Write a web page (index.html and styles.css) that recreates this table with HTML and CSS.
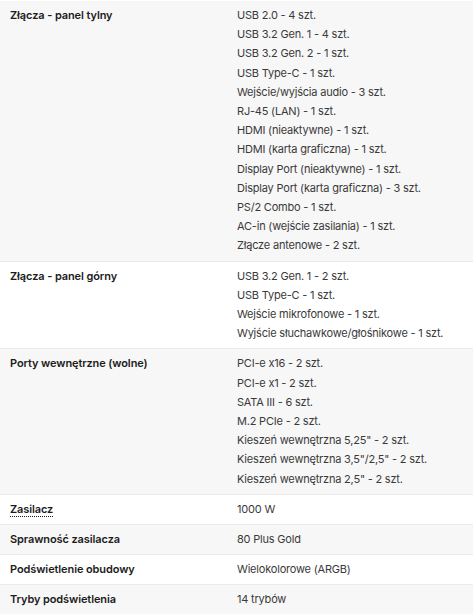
FILE: index.html
```html
<!DOCTYPE html>
<html lang="pl">
<head>
<meta charset="utf-8">
<link rel="stylesheet" href="styles.css">
</head>
<body>
<div class="specs">
  <div class="row alt">
    <div class="label">Złącza - panel tylny</div>
    <div class="value">
      <div>USB 2.0 - 4 szt.</div>
      <div>USB 3.2 Gen. 1 - 4 szt.</div>
      <div>USB 3.2 Gen. 2 - 1 szt.</div>
      <div>USB Type-C - 1 szt.</div>
      <div>Wejście/wyjścia audio - 3 szt.</div>
      <div>RJ-45 (LAN) - 1 szt.</div>
      <div>HDMI (nieaktywne) - 1 szt.</div>
      <div>HDMI (karta graficzna) - 1 szt.</div>
      <div>Display Port (nieaktywne) - 1 szt.</div>
      <div>Display Port (karta graficzna) - 3 szt.</div>
      <div>PS/2 Combo - 1 szt.</div>
      <div>AC-in (wejście zasilania) - 1 szt.</div>
      <div>Złącze antenowe - 2 szt.</div>
    </div>
  </div>
  <div class="row">
    <div class="label">Złącza - panel górny</div>
    <div class="value">
      <div>USB 3.2 Gen. 1 - 2 szt.</div>
      <div>USB Type-C - 1 szt.</div>
      <div>Wejście mikrofonowe - 1 szt.</div>
      <div>Wyjście słuchawkowe/głośnikowe - 1 szt.</div>
    </div>
  </div>
  <div class="row alt">
    <div class="label">Porty wewnętrzne (wolne)</div>
    <div class="value">
      <div>PCI-e x16 - 2 szt.</div>
      <div>PCI-e x1 - 2 szt.</div>
      <div>SATA III - 6 szt.</div>
      <div>M.2 PCIe - 2 szt.</div>
      <div>Kieszeń wewnętrzna 5,25" - 2 szt.</div>
      <div>Kieszeń wewnętrzna 3,5"/2,5" - 2 szt.</div>
      <div>Kieszeń wewnętrzna 2,5" - 2 szt.</div>
    </div>
  </div>
  <div class="row">
    <div class="label"><span class="dotted">Zasilacz</span></div>
    <div class="value"><div>1000 W</div></div>
  </div>
  <div class="row alt">
    <div class="label">Sprawność zasilacza</div>
    <div class="value"><div>80 Plus Gold</div></div>
  </div>
  <div class="row">
    <div class="label">Podświetlenie obudowy</div>
    <div class="value"><div>Wielokolorowe (ARGB)</div></div>
  </div>
  <div class="row alt">
    <div class="label">Tryby podświetlenia</div>
    <div class="value"><div>14 trybów</div></div>
  </div>
</div>
</body>
</html>
```

FILE: styles.css
```css
html, body {
  margin: 0;
  padding: 0;
  background: #ffffff;
}
body {
  font-family: Inter, "Noto Sans", sans-serif;
  font-size: 11px;
  line-height: 19.2px;
  color: #2b2b2b;
}
.specs {
  display: flex;
  flex-direction: column;
  padding-top: 1px;
}
.row {
  display: grid;
  grid-template-columns: 227px 1fr;
  padding: 5px 10px 5px 10px;
  border-bottom: 1px solid #ebebeb;
  background: #ffffff;
}
.row.alt {
  background: #f7f7f7;
}
.label {
  font-weight: 600;
  color: #1c1c1c;
  letter-spacing: -0.1px;
}
.value {
  color: #3a3a3a;
  letter-spacing: -0.2px;
}
.dotted {
  border-bottom: 1px dotted #1c1c1c;
}
```
